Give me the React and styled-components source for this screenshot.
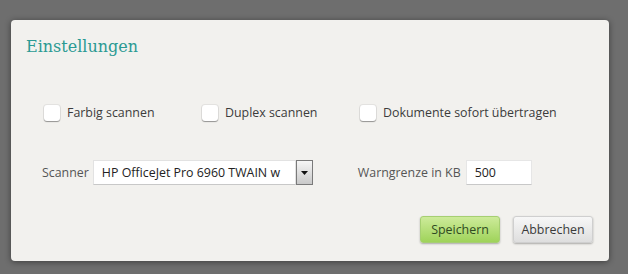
import React from "react";
import styled, { createGlobalStyle } from "styled-components";

const GlobalStyle = createGlobalStyle`
  html, body {
    margin: 0;
    padding: 0;
    background: #6e6e6e;
    height: 100%;
  }
  body {
    font-family: "Open Sans", "Noto Sans", sans-serif;
  }
`;

const Page = styled.div`
  width: 628px;
  height: 274px;
  padding: 20px 0 0 11px;
  box-sizing: border-box;
  overflow: hidden;
`;

const Dialog = styled.div`
  width: 598px;
  height: 241px;
  box-sizing: border-box;
  background: #f2f1ee;
  border-radius: 4px;
  box-shadow: 0 1px 6px rgba(0, 0, 0, 0.45);
  padding: 16px 15px 0 15px;
  display: flex;
  flex-direction: column;
`;

const Title = styled.h2`
  margin: 0;
  font-family: "DejaVu Serif", serif;
  font-weight: normal;
  font-size: 16px;
  line-height: 21px;
  color: #2b9a93;
`;

const CheckRow = styled.div`
  display: flex;
  align-items: center;
  margin-top: 47px;
  padding-left: 18px;
`;

const CheckItem = styled.label`
  display: flex;
  align-items: center;
  gap: 7px;
  width: ${(p) => p.$w}px;
  font-size: 12.4px;
  color: #3c3c3c;
`;

const Box = styled.span`
  width: 16px;
  height: 16px;
  background: #fff;
  border-radius: 3px;
  box-shadow: 0 1px 1px rgba(0, 0, 0, 0.35), 0 0 0 1px rgba(0, 0, 0, 0.06);
`;

const FieldRow = styled.div`
  display: flex;
  align-items: center;
  margin-top: 39px;
  padding-left: 16px;
`;

const Label = styled.span`
  font-size: 12.4px;
  color: #555;
  margin-right: ${(p) => p.$gap}px;
`;

const Select = styled.div`
  display: flex;
  align-items: stretch;
  height: 25px;
  margin-right: 45px;
`;

const SelectValue = styled.div`
  width: 203px;
  box-sizing: border-box;
  background: #fff;
  border: 1px solid #e2e2e2;
  border-bottom-color: #c8c8c8;
  padding-left: 8px;
  font-size: 12.4px;
  color: #222;
  line-height: 23px;
  white-space: nowrap;
  overflow: hidden;
`;

const SelectButton = styled.div`
  width: 17px;
  box-sizing: border-box;
  border: 1px solid #7a7a7a;
  background: linear-gradient(#f6f6f6, #c9c9c9);
  display: flex;
  align-items: center;
  justify-content: center;
`;

const Input = styled.div`
  width: 66px;
  height: 25px;
  box-sizing: border-box;
  background: #fff;
  border: 1px solid #e6e6e6;
  border-bottom-color: #c8c8c8;
  padding-left: 8px;
  font-size: 12.4px;
  line-height: 23px;
  color: #222;
`;

const Footer = styled.div`
  display: flex;
  justify-content: flex-end;
  gap: 13px;
  margin-top: 31px;
  padding-right: 1px;
`;

const Button = styled.button`
  width: 80px;
  height: 27px;
  font-family: "Open Sans", "Noto Sans", sans-serif;
  font-size: 12.4px;
  border-radius: 3px;
  padding: 0;
  color: ${(p) => (p.$primary ? "#2f4a22" : "#3a3a3a")};
  background: ${(p) =>
    p.$primary
      ? "linear-gradient(#cdeb9a, #9fd35a)"
      : "linear-gradient(#f7f7f7, #dedede)"};
  border: 1px solid ${(p) => (p.$primary ? "#a6cf72" : "#cfcfcf")};
  box-shadow: 0 1px 2px rgba(0, 0, 0, 0.3);
`;

export default function App() {
  return (
    <Page>
      <GlobalStyle />
      <Dialog>
        <Title>Einstellungen</Title>
        <CheckRow>
          <CheckItem $w={158}>
            <Box />
            Farbig scannen
          </CheckItem>
          <CheckItem $w={158}>
            <Box />
            Duplex scannen
          </CheckItem>
          <CheckItem $w={220}>
            <Box />
            Dokumente sofort übertragen
          </CheckItem>
        </CheckRow>
        <FieldRow>
          <Label $gap={4}>Scanner</Label>
          <Select>
            <SelectValue>HP OfficeJet Pro 6960 TWAIN w</SelectValue>
            <SelectButton>
              <svg width="7" height="4" viewBox="0 0 7 4">
                <path d="M0 0h7L3.5 4z" fill="#111" />
              </svg>
            </SelectButton>
          </Select>
          <Label $gap={5}>Warngrenze in KB</Label>
          <Input>500</Input>
        </FieldRow>
        <Footer>
          <Button $primary>Speichern</Button>
          <Button>Abbrechen</Button>
        </Footer>
      </Dialog>
    </Page>
  );
}
